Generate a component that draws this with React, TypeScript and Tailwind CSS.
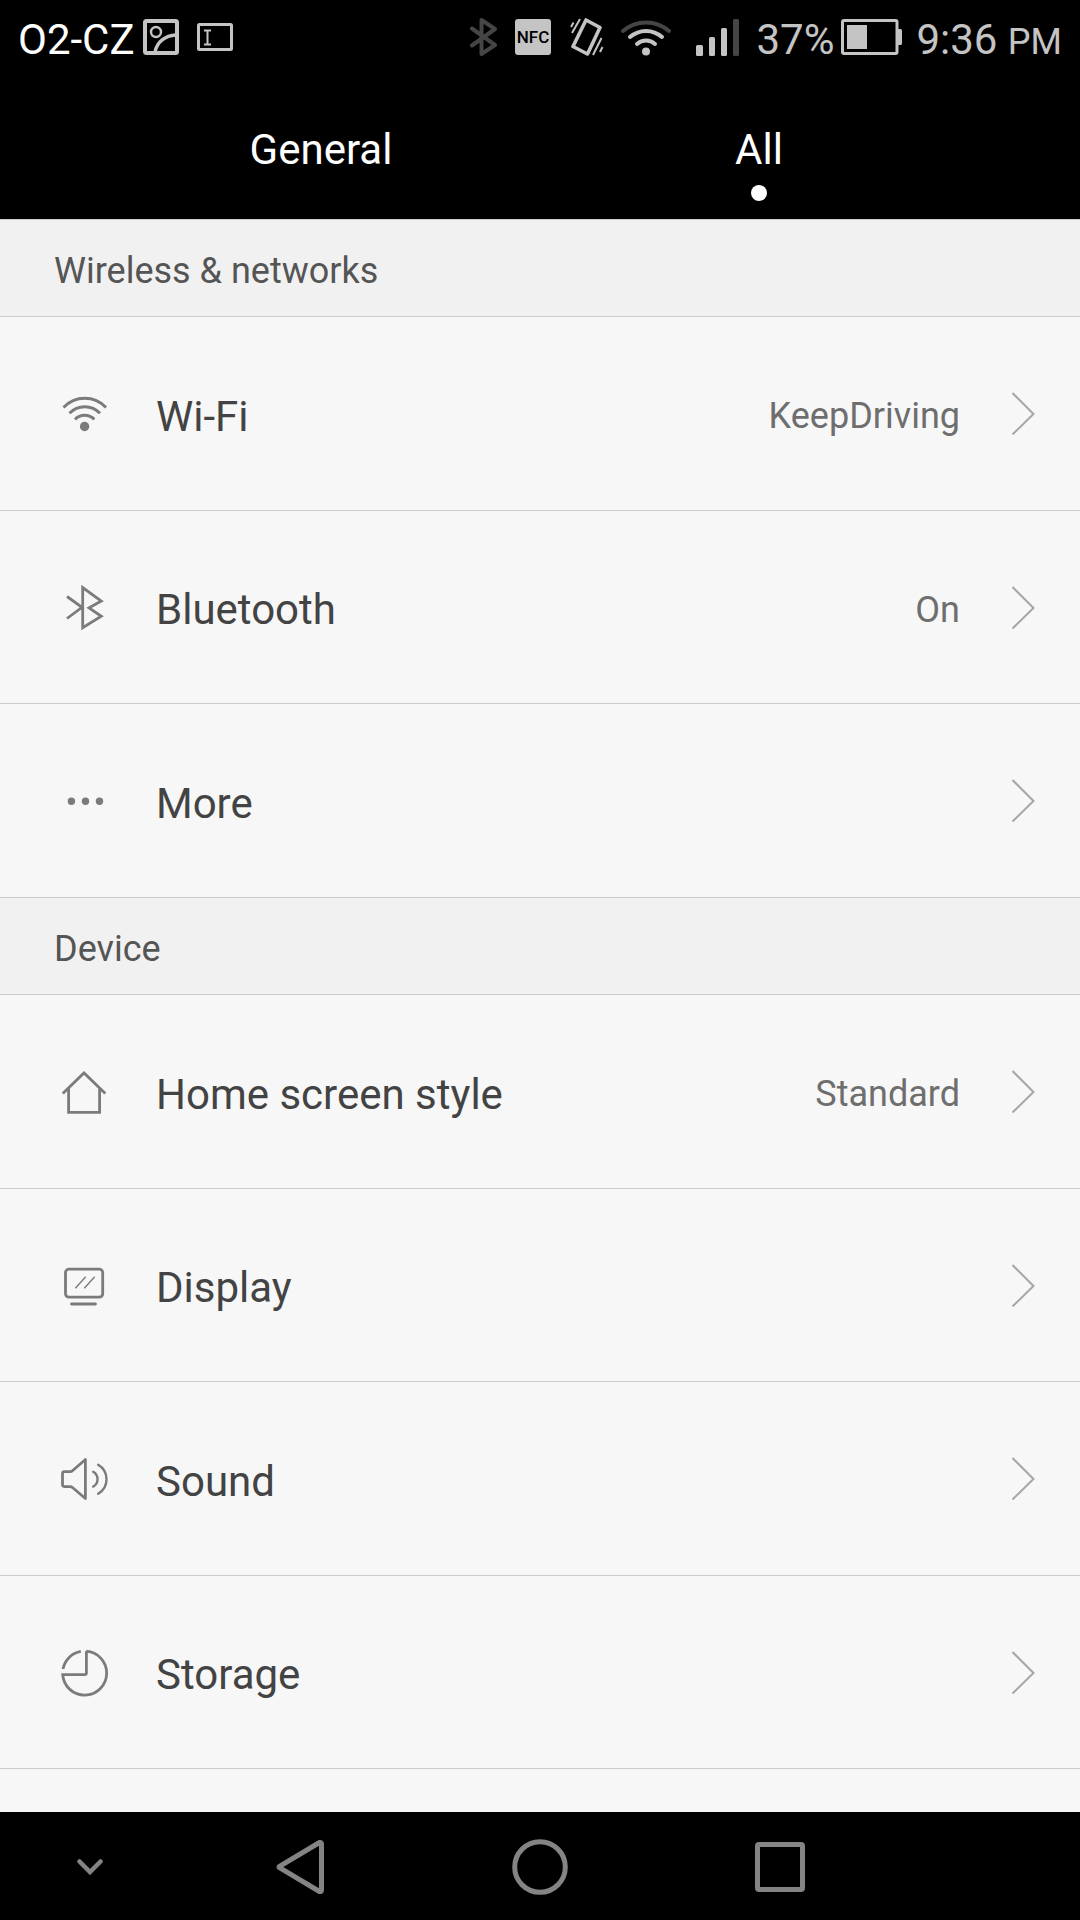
import type { ReactNode } from "react";

type Item = {
  label: string;
  value?: string;
  icon: ReactNode;
};

type Section = {
  title: string;
  items: Item[];
};

function RowIcon({ children }: { children: ReactNode }) {
  return (
    <svg
      viewBox="0 0 49 49"
      className="w-[49px] h-[49px] shrink-0"
      fill="none"
      stroke="#7b7b7b"
      strokeWidth="2.8"
      aria-hidden="true"
    >
      {children}
    </svg>
  );
}

const sections: Section[] = [
  {
    title: "Wireless & networks",
    items: [
      {
        label: "Wi-Fi",
        value: "KeepDriving",
        icon: (
          <RowIcon>
            <path d="M3.5 18.5A29 29 0 0 1 46 18.5" strokeWidth="3" />
            <path d="M9.5 24.3A21 21 0 0 1 40 24.3" strokeWidth="3" />
            <path d="M15 30.4A13.5 13.5 0 0 1 34.3 30.4" strokeWidth="3" />
            <circle cx="24.6" cy="37.5" r="4.7" fill="#7b7b7b" stroke="none" />
          </RowIcon>
        ),
      },
      {
        label: "Bluetooth",
        value: "On",
        icon: (
          <RowIcon>
            <path d="M7 13.5L22 24.3L7 35.5M22.7 4.5V44.7L41.3 33.3L29 24.8L41.3 18Z" />
          </RowIcon>
        ),
      },
      {
        label: "More",
        icon: (
          <RowIcon>
            <g fill="#7b7b7b" stroke="none">
              <circle cx="11.4" cy="25.3" r="3.7" />
              <circle cx="25.5" cy="25.3" r="3.7" />
              <circle cx="39.5" cy="25.3" r="3.7" />
            </g>
          </RowIcon>
        ),
      },
    ],
  },
  {
    title: "Device",
    items: [
      {
        label: "Home screen style",
        value: "Standard",
        icon: (
          <RowIcon>
            <path d="M2.8 26.5L24 6L45.3 26.5M8.6 21.5V45.3H39.6V21.5" />
          </RowIcon>
        ),
      },
      {
        label: "Display",
        icon: (
          <RowIcon>
            <rect x="5.5" y="8.2" width="37.2" height="28" rx="3.5" />
            <path d="M11.5 43H35.5" strokeLinecap="round" />
            <path d="M15.3 27.2L25.7 15.8M24.3 27.2L34.7 15.8" strokeWidth="1.4" />
          </RowIcon>
        ),
      },
      {
        label: "Sound",
        icon: (
          <RowIcon>
            <path
              d="M25.4 5.5V44.5L12.5 33.5Q11.5 32.6 10 32.6H4.5Q2.5 32.6 2.5 30.6V19.7Q2.5 17.7 4.5 17.7H10Q11.5 17.7 12.5 16.7Z"
              strokeLinejoin="round"
            />
            <path d="M33.2 17.8A8.5 8.5 0 0 1 33.2 32.6" strokeLinecap="round" strokeWidth="2.4" />
            <path d="M38.2 10.8A16.8 16.8 0 0 1 38.2 39.8" strokeLinecap="round" strokeWidth="2.4" />
          </RowIcon>
        ),
      },
      {
        label: "Storage",
        icon: (
          <RowIcon>
            <path d="M26.3 3.2A22 22 0 1 1 2.7 26.6H24.8Q26.4 26.6 26.4 25V3.2" />
            <path d="M20.8 3.4A22 22 0 0 0 3 21" />
          </RowIcon>
        ),
      },
    ],
  },
];

function StatusBar() {
  return (
    <div className="flex items-center h-[74px] px-[18px] text-[#c4c4c4] text-[42px]">
      <span className="pt-1 text-white">O2-CZ</span>
      <svg viewBox="0 0 36 36" className="w-9 h-9 ml-2" fill="none" stroke="currentColor" aria-hidden="true">
        <rect x="2" y="2" width="32" height="32" rx="1.5" strokeWidth="4" />
        <circle cx="13" cy="13" r="5" strokeWidth="2.4" />
        <path d="M12 33C14 23 22 16.5 33 16" strokeWidth="3.4" />
      </svg>
      <svg viewBox="0 0 36 28" className="w-9 h-7 ml-[18px]" fill="none" stroke="currentColor" aria-hidden="true">
        <rect x="1.5" y="1.5" width="33" height="25" rx="1" strokeWidth="3" />
        <path d="M7 7.5H14M7 21.5H14M10.5 7.5V21.5" strokeWidth="2" />
      </svg>

      <div className="flex items-center ml-auto">
        <svg viewBox="0 0 28 38" className="w-7 h-[38px]" fill="none" stroke="#454545" strokeWidth="4" strokeLinejoin="round" strokeLinecap="round" aria-hidden="true">
          <path d="M2 10.5L25 27L11.5 36V2L25 11L2 27.5" />
        </svg>
        <svg viewBox="0 0 36 36" className="w-9 h-9 ml-[17px]" role="img" aria-label="NFC">
          <rect width="36" height="36" rx="3" fill="#c4c4c4" />
          <text x="18" y="24" textAnchor="middle" className="text-[17px] font-medium" fill="#000">
            NFC
          </text>
        </svg>
        <svg viewBox="0 0 34 38" className="w-[34px] h-[38px] ml-[19px]" fill="none" stroke="currentColor" aria-hidden="true">
          <path d="M16 2L30 9.5L17.5 36L3 28.5Z" strokeWidth="3.6" strokeLinejoin="round" />
          <path d="M1 9L3.5 4.5M2 15L10 1M23 37L31.5 20M30 34L32.5 29" strokeWidth="2" />
        </svg>
        <svg viewBox="0 0 50 38" className="w-[50px] h-[38px] ml-[17px]" fill="none" stroke="currentColor" strokeWidth="4" strokeLinecap="round" aria-hidden="true">
          <path d="M2 13A35 35 0 0 1 48 13" stroke="#454545" />
          <path d="M9 19A24 24 0 0 1 41 19" />
          <path d="M16 26A13.5 13.5 0 0 1 34 26" />
          <circle cx="25" cy="33.5" r="4" fill="currentColor" stroke="none" />
        </svg>
        <svg viewBox="0 0 43 38" className="w-[43px] h-[38px] ml-[25px]" fill="currentColor" aria-hidden="true">
          <rect x="0" y="27" width="7" height="11" rx="1.5" />
          <rect x="13" y="19" width="6" height="19" rx="1.5" />
          <rect x="25" y="10" width="6" height="28" rx="1.5" />
          <rect x="37" y="1" width="6" height="37" rx="1.5" fill="#454545" />
        </svg>
        <span className="ml-[17px] pt-1">37%</span>
        <svg viewBox="0 0 61 36" className="w-[61px] h-9 ml-[7px]" fill="currentColor" aria-hidden="true">
          <rect x="1.5" y="1.5" width="54.5" height="33" rx="1.5" fill="none" stroke="currentColor" strokeWidth="3" />
          <rect x="6" y="6" width="20" height="24" />
          <rect x="56" y="10" width="5" height="16" rx="1.5" />
        </svg>
        <span className="ml-3.5 pt-1 whitespace-nowrap">
          9:36 <span className="text-[36px]">PM</span>
        </span>
      </div>
    </div>
  );
}

function Tabs() {
  return (
    <div role="tablist" className="grid grid-cols-2 h-[145px] px-[102px] text-[42px] leading-[52px] text-white">
      <button role="tab" aria-selected="false" className="flex flex-col items-center pt-[50px]">
        General
      </button>
      <button role="tab" aria-selected="true" className="flex flex-col items-center pt-[50px]">
        All
        <span className="w-4 h-4 mt-[9px] rounded-full bg-white" />
      </button>
    </div>
  );
}

function SettingRow({ item }: { item: Item }) {
  return (
    <li className="h-[193px] odd:h-[194px] border-t border-[#cccccc]">
      <button className="flex items-center w-full h-full pl-[60px] pr-11 text-left">
        {item.icon}
        <span className="flex-1 ml-[47px] pt-[5px] text-[42px] text-[#434343]">{item.label}</span>
        {item.value && <span className="pt-[5px] text-[36px] text-[#6e6e6e]">{item.value}</span>}
        <svg viewBox="0 0 24 43" className="w-6 h-[43px] ml-[52px]" fill="none" stroke="#a6a6a6" strokeWidth="2" aria-hidden="true">
          <path d="M0.5 1L21.5 22L0.5 42.5" />
        </svg>
      </button>
    </li>
  );
}

function NavBar() {
  return (
    <nav className="grid grid-cols-[3fr_4fr_4fr_4fr_3fr] h-[108px] pt-0.5 bg-black text-[#848484]">
      <button aria-label="Hide navigation bar" className="flex items-center justify-center">
        <svg viewBox="0 0 26 16" className="w-[26px] h-4" fill="none" stroke="currentColor" strokeWidth="4.5" strokeLinecap="round">
          <path d="M2.5 2.5L13 13L23.5 2.5" />
        </svg>
      </button>
      <button aria-label="Back" className="flex items-center justify-center">
        <svg viewBox="0 0 48 56" className="w-12 h-14" fill="none" stroke="currentColor" strokeWidth="5" strokeLinejoin="round">
          <path d="M3.5 27.3L43.5 3.5Q45.500 3 45.5 5V51Q45.5 53 43.5 52.5L3.5 28.7Q2.5 28 3.5 27.3Z" />
        </svg>
      </button>
      <button aria-label="Home" className="flex items-center justify-center">
        <svg viewBox="0 0 56 56" className="w-14 h-14" fill="none" stroke="currentColor" strokeWidth="5">
          <circle cx="28" cy="28" r="25.3" />
        </svg>
      </button>
      <button aria-label="Recent apps" className="flex items-center justify-center">
        <svg viewBox="0 0 50 50" className="w-[50px] h-[50px]" fill="none" stroke="currentColor" strokeWidth="5">
          <rect x="2.5" y="2.5" width="45" height="45" rx="1.5" />
        </svg>
      </button>
    </nav>
  );
}

export default function App() {
  return (
    <div className="flex flex-col min-h-screen bg-[#f7f7f7] font-[Roboto,sans-serif]">
      <header className="bg-black">
        <StatusBar />
        <Tabs />
      </header>
      <main className="flex-1">
        {sections.map((section) => (
          <section key={section.title}>
            <h2 className="flex items-center h-[97px] pl-[54px] pt-1.5 border-t border-[#cccccc] bg-[#f1f1f1] text-[36px] text-[#555555]">
              {section.title}
            </h2>
            <ul>
              {section.items.map((item) => (
                <SettingRow key={item.label} item={item} />
              ))}
            </ul>
          </section>
        ))}
        <div className="border-t border-[#cccccc]" />
      </main>
      <NavBar />
    </div>
  );
}
